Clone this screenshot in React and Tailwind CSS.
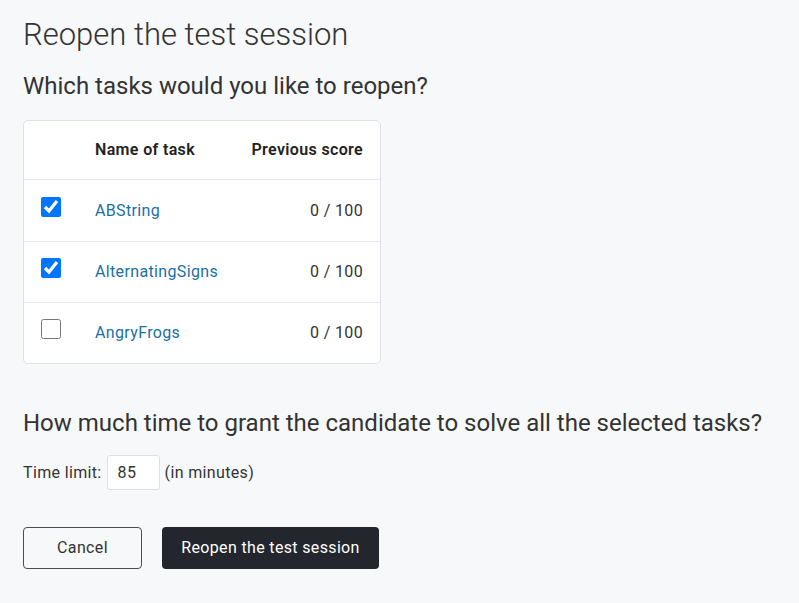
import { useState } from "react";

const tasks = [
  { id: 1, name: "ABString", score: "0 / 100", checked: true, h: "h-[62px]" },
  { id: 2, name: "AlternatingSigns", score: "0 / 100", checked: true, h: "h-[61px]" },
  { id: 3, name: "AngryFrogs", score: "0 / 100", checked: false, h: "h-[61px]" },
];

const App = () => {
  const [selected, setSelected] = useState(
    tasks.reduce((acc, t) => ({ ...acc, [t.id]: t.checked }), {})
  );
  const [minutes, setMinutes] = useState("85");

  return (
    <div className="min-h-screen w-full bg-[#f7f8fa] text-[#333] px-[23px] pt-[15px] font-['Roboto','Liberation_Sans',sans-serif]">
      {/* Title */}
      <h1 className="text-[31px] leading-[40px] font-light text-[#333]">
        Reopen the test session
      </h1>

      <h2 className="mt-[15px] text-[24px] leading-[32px] font-normal">
        Which tasks would you like to reopen?
      </h2>

      {/* Tasks table */}
      <div className="mt-[18px] w-[358px] bg-white border border-[#dfe2e6] rounded-[5px] text-[16px] leading-[24px] tracking-[0.35px]">
        <div className="h-[58px] flex items-center font-semibold text-[#222]">
          <div className="w-[71px] shrink-0"></div>
          <div className="flex-1">Name of task</div>
          <div className="pr-[17px]">Previous score</div>
        </div>
        {tasks.map((task) => (
          <div
            key={task.id}
            className={`${task.h} flex items-center border-t border-[#e6e8eb]`}
          >
            <div className="w-[71px] shrink-0 pl-[17px] flex items-center">
              <input
                type="checkbox"
                checked={selected[task.id]}
                onChange={(e) =>
                  setSelected({ ...selected, [task.id]: e.target.checked })
                }
                className="w-5 h-5 m-0 mb-[8px] accent-[#0075ff]"
              />
            </div>
            <a href="#" className="flex-1 text-[#1b6fa8]">
              {task.name}
            </a>
            <div className="pr-[17px] text-[#333]">{task.score}</div>
          </div>
        ))}
      </div>

      <h2 className="mt-[43px] text-[24px] leading-[32px] font-normal">
        How much time to grant the candidate to solve all the selected tasks?
      </h2>

      {/* Time limit */}
      <div className="mt-[16px] flex items-center text-[16px] leading-[24px] tracking-[0.35px]">
        <span>Time limit:</span>
        <input
          type="text"
          value={minutes}
          onChange={(e) => setMinutes(e.target.value)}
          className="ml-[5px] w-[53px] h-[35px] px-[10px] bg-white border border-[#dcdfe3] rounded-[3px] text-[#333] outline-none"
        />
        <span className="ml-[5px]">(in minutes)</span>
      </div>

      {/* Actions */}
      <div className="mt-[37px] flex gap-[20px] text-[16px] tracking-[0.35px]">
        <button className="w-[119px] h-[42px] border border-[#4a4d52] rounded-[4px] text-[#333]">
          Cancel
        </button>
        <button className="w-[217px] h-[42px] bg-[#23262d] rounded-[4px] text-white">
          Reopen the test session
        </button>
      </div>
    </div>
  );
};

export default App;
